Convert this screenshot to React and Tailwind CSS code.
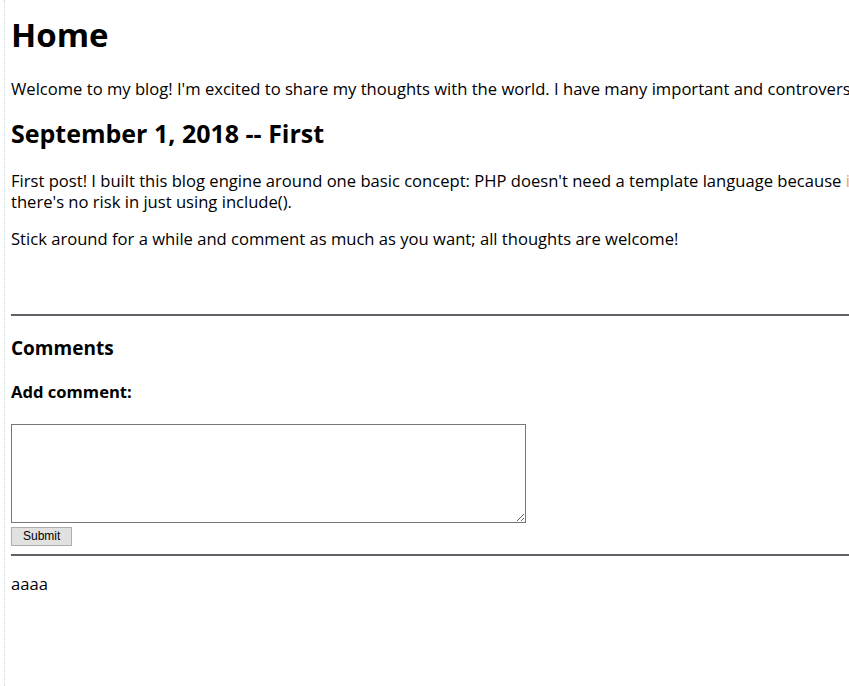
export default function App() {
  return (
    <div className="h-[686px] w-[849px] overflow-hidden bg-white flex">
      <div className="w-[5px] shrink-0 border-r border-dotted border-[#c8d8dc]" />
      <div className="pl-[6px] w-[1100px] shrink-0 text-black font-['Open_Sans',sans-serif] text-[16.6px]">
        <h1 className="text-[33px] font-bold leading-[38px] mt-[16px]">Home</h1>
        <p className="mt-[24px] leading-[21px] whitespace-nowrap">
          Welcome to my blog! I'm excited to share my thoughts with the world. I have many important and controversial
        </p>
        <h2 className="text-[25px] font-bold leading-[28px] mt-[20px]">September 1, 2018 -- First</h2>
        <p className="mt-[23px] leading-[21px] whitespace-nowrap">
          First post! I built this blog engine around one basic concept: PHP doesn't need a template language because <span className="text-[#f5a623]">it</span>
          <br />
          there's no risk in just using include().
        </p>
        <p className="mt-[16px] leading-[21px] whitespace-nowrap">
          Stick around for a while and comment as much as you want; all thoughts are welcome!
        </p>
        <div className="h-[2px] bg-[#5f6068] mt-[65px] w-[850px]" />
        <h3 className="text-[19px] font-bold leading-[22px] mt-[21px]">Comments</h3>
        <h4 className="text-[16.6px] font-bold leading-[20px] mt-[23px]">Add comment:</h4>
        <textarea className="block mt-[22px] w-[515px] h-[99px] border border-[#767676] resize-y" />
        <button className="block mt-[4px] h-[19px] px-[11px] text-[12px] leading-[15px] bg-[#e1e1e1] border border-[#adadad] font-['Liberation_Sans',sans-serif]">
          Submit
        </button>
        <div className="h-[2px] bg-[#5f6068] mt-[8px] w-[850px]" />
        <p className="mt-[17px] leading-[21px]">aaaa</p>
      </div>
    </div>
  );
}
